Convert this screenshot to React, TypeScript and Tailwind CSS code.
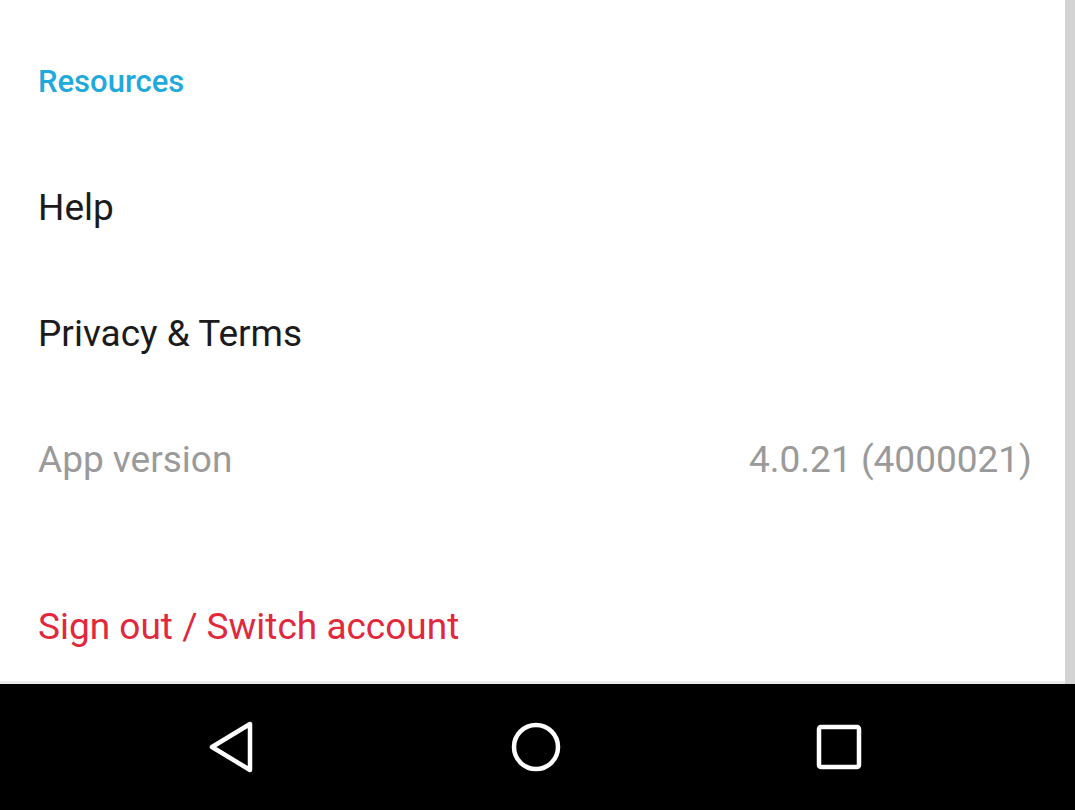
export default function App() {
  return (
    <div className="flex flex-col h-[810px] w-full bg-white overflow-hidden" style={{ fontFamily: 'Roboto, "Noto Sans", sans-serif' }}>
      {/* ── Settings list ── */}
      <div className="flex h-[684px] shrink-0">
        <div className="flex-1 flex flex-col pl-[38px] pr-[33px] pt-[19px] border-b-[3px] border-[#ececec]">
          <div className="h-[126px] flex items-center">
            <span className="text-[31px] font-medium text-[#1fa9dd]">Resources</span>
          </div>
          <div className="h-[126px] flex items-center">
            <span className="text-[37px] text-[#1b1b1b]">Help</span>
          </div>
          <div className="h-[126px] flex items-center">
            <span className="text-[37px] text-[#1b1b1b]">Privacy &amp; Terms</span>
          </div>
          <div className="h-[126px] flex items-center justify-between">
            <span className="text-[37px] text-[#9a9a9a]">App version</span>
            <span className="text-[37px] text-[#9a9a9a]">4.0.21 (4000021)</span>
          </div>
          <div className="h-[62px]" />
          <div className="h-[84px] flex items-center">
            <span className="text-[37px] text-[#e2283d]">Sign out / Switch account</span>
          </div>
        </div>
        <div className="w-[10px] bg-[#d3d3d3]" />
      </div>

      {/* ── Nav bar ── */}
      <div className="flex-1 bg-black flex items-center justify-center gap-[255px] pr-[5px]">
        <svg width="48" height="52" viewBox="0 0 48 52" fill="none" stroke="white" strokeWidth="4.5" strokeLinejoin="round" strokeLinecap="round">
          <path d="M4 26 L42 3 L42 49 Z" />
        </svg>
        <svg width="50" height="50" viewBox="0 0 50 50" fill="none" stroke="white" strokeWidth="4.5">
          <circle cx="25" cy="25" r="22" />
        </svg>
        <svg width="46" height="46" viewBox="0 0 46 46" fill="none" stroke="white" strokeWidth="4.5">
          <rect x="3" y="3" width="40" height="40" rx="2" />
        </svg>
      </div>
    </div>
  )
}
